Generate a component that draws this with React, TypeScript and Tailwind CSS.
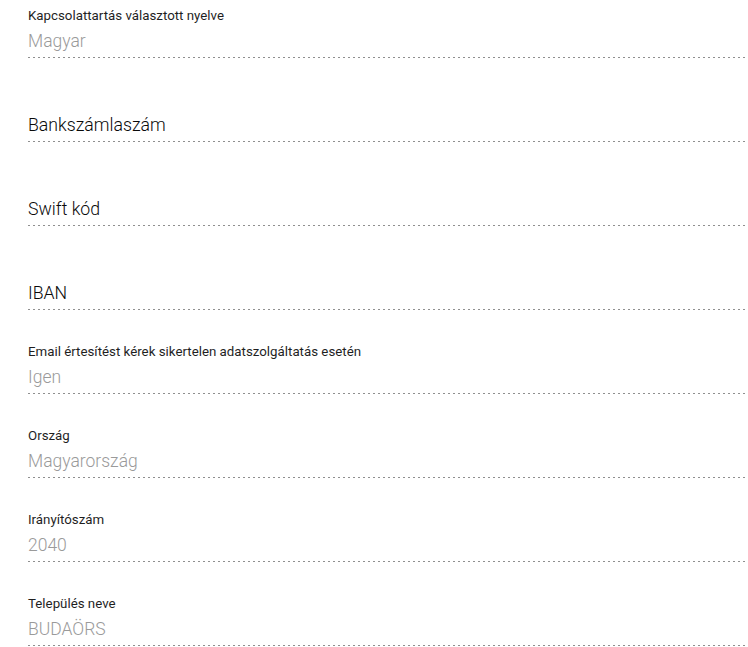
import React from "react";

type Field = { label: string; value?: string };

const fields: Field[] = [
  { label: "Kapcsolattartás választott nyelve", value: "Magyar" },
  { label: "Bankszámlaszám" },
  { label: "Swift kód" },
  { label: "IBAN" },
  { label: "Email értesítést kérek sikertelen adatszolgáltatás esetén", value: "Igen" },
  { label: "Ország", value: "Magyarország" },
  { label: "Irányítószám", value: "2040" },
  { label: "Település neve", value: "BUDAÖRS" },
];

function FieldRow({ f }: { f: Field }) {
  const hasValue = !!f.value;
  return (
    <div className="flex flex-col pt-[8px]">
      <div className="h-4 text-[13.3px] leading-4 text-[#1f1f1f] whitespace-nowrap">
        {hasValue ? f.label : ""}
      </div>
      <div
        className={
          "mt-[5px] h-6 leading-6 font-light whitespace-nowrap " +
          (hasValue ? "text-[17.5px] text-[#9a9a9a]" : "text-[17.7px] text-[#0a0a0a]")
        }
      >
        {hasValue ? f.value : f.label}
      </div>
      <div className="mt-[4px] h-px w-full bg-[repeating-linear-gradient(to_right,#8f8f8f_0px,#8f8f8f_2px,transparent_2px,transparent_5px)]" />
    </div>
  );
}

export default function App() {
  return (
    <div
      className="w-[748px] h-[647px] bg-white pl-[28px] pr-[3px] flex flex-col gap-[26px] overflow-hidden"
      style={{ fontFamily: "Roboto, 'Liberation Sans', sans-serif" }}
    >
      {fields.map((f) => (
        <FieldRow key={f.label} f={f} />
      ))}
    </div>
  );
}
